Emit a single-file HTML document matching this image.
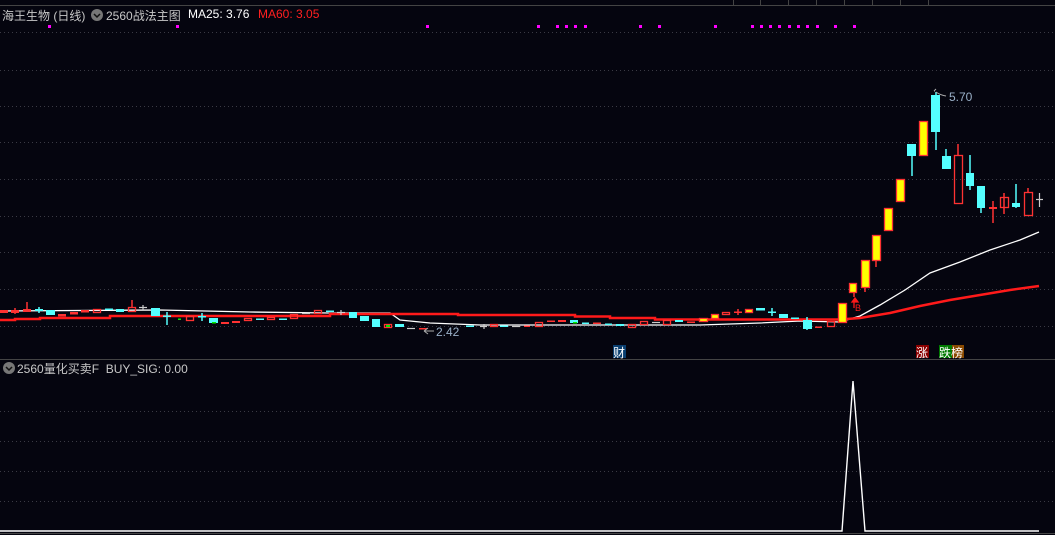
<!DOCTYPE html>
<html><head><meta charset="utf-8"><style>
html,body{margin:0;padding:0;background:#05050f;width:1055px;height:535px;overflow:hidden}
.t{position:absolute;font-family:"Liberation Sans","Noto Sans CJK SC",sans-serif;font-size:12px;white-space:nowrap}
</style></head><body>
<svg width="1055" height="535" style="position:absolute;left:0;top:0" xmlns="http://www.w3.org/2000/svg">
<g stroke="#3a3a44" stroke-width="1" stroke-dasharray="1,3">
<line x1="0" y1="32.5" x2="1055" y2="32.5"/><line x1="0" y1="70.5" x2="1055" y2="70.5"/><line x1="0" y1="106.5" x2="1055" y2="106.5"/><line x1="0" y1="142.5" x2="1055" y2="142.5"/><line x1="0" y1="179.5" x2="1055" y2="179.5"/><line x1="0" y1="216.5" x2="1055" y2="216.5"/><line x1="0" y1="252.5" x2="1055" y2="252.5"/><line x1="0" y1="289.5" x2="1055" y2="289.5"/><line x1="0" y1="326.5" x2="1055" y2="326.5"/>
<line x1="0" y1="411.5" x2="1055" y2="411.5"/><line x1="0" y1="441.5" x2="1055" y2="441.5"/><line x1="0" y1="471.5" x2="1055" y2="471.5"/><line x1="0" y1="501.5" x2="1055" y2="501.5"/>
</g>
<line x1="0" y1="5.5" x2="1055" y2="5.5" stroke="#444"/>
<g stroke="#444"><line x1="733.5" y1="0" x2="733.5" y2="6"/><line x1="760.5" y1="0" x2="760.5" y2="6"/><line x1="788.5" y1="0" x2="788.5" y2="6"/><line x1="816.5" y1="0" x2="816.5" y2="6"/><line x1="844.5" y1="0" x2="844.5" y2="6"/><line x1="872.5" y1="0" x2="872.5" y2="6"/><line x1="900.5" y1="0" x2="900.5" y2="6"/><line x1="928.5" y1="0" x2="928.5" y2="6"/></g>
<line x1="0" y1="359.5" x2="1055" y2="359.5" stroke="#444"/>
<line x1="0" y1="533.5" x2="1055" y2="533.5" stroke="#444"/>
<g fill="#ff00ff">
<rect x="48" y="25" width="3" height="3"/><rect x="176" y="25" width="3" height="3"/><rect x="426" y="25" width="3" height="3"/><rect x="537" y="25" width="3" height="3"/><rect x="556" y="25" width="3" height="3"/><rect x="565" y="25" width="3" height="3"/><rect x="574" y="25" width="3" height="3"/><rect x="584" y="25" width="3" height="3"/><rect x="639" y="25" width="3" height="3"/><rect x="658" y="25" width="3" height="3"/><rect x="714" y="25" width="3" height="3"/><rect x="751" y="25" width="3" height="3"/><rect x="760" y="25" width="3" height="3"/><rect x="769" y="25" width="3" height="3"/><rect x="778" y="25" width="3" height="3"/><rect x="788" y="25" width="3" height="3"/><rect x="797" y="25" width="3" height="3"/><rect x="806" y="25" width="3" height="3"/><rect x="816" y="25" width="3" height="3"/><rect x="834" y="25" width="3" height="3"/><rect x="853" y="25" width="3" height="3"/>
</g>
<!-- MA lines -->
<polyline fill="none" stroke="#ffffff" stroke-width="1.3" points="0,311 160,310 250,312 330,313 390,313 400,320 430,323 480,325 700,325 760,323 800,321 840,322 860,316 880,305 905,290 930,273 960,262 990,250 1020,240 1039,232"/>
<polyline fill="none" stroke="#ff1a1a" stroke-width="2.5" points="0,320 15,320 15,319 40,319 40,318 110,318 110,316 330,316 330,314 458,314 458,315 575,315 575,316.5 610,316.5 610,318 655,318 655,319.5 840,319.5 860,318 890,313 920,306 950,300 980,295 1010,290 1039,286"/>
<!-- candles -->
<g stroke="#ff3232" stroke-width="1.5">
<line x1="27" y1="302" x2="27" y2="311"/><line x1="15" y1="308" x2="15" y2="314"/><line x1="132" y1="300" x2="132" y2="308"/><line x1="854" y1="283" x2="854" y2="297"/><line x1="865" y1="283" x2="865" y2="292"/><line x1="876" y1="258" x2="876" y2="267"/><line x1="958" y1="144" x2="958" y2="156"/><line x1="993" y1="201" x2="993" y2="223"/><line x1="1004" y1="193" x2="1004" y2="214"/><line x1="1028" y1="188" x2="1028" y2="193"/><line x1="738" y1="309" x2="738" y2="315"/>
</g>
<g stroke="#54ffff" stroke-width="1.5">
<line x1="167" y1="312" x2="167" y2="325"/><line x1="202" y1="313" x2="202" y2="321"/><line x1="912" y1="155" x2="912" y2="176"/><line x1="936" y1="92" x2="936" y2="150"/><line x1="946" y1="149" x2="946" y2="157"/><line x1="970" y1="155" x2="970" y2="190"/><line x1="981" y1="206" x2="981" y2="213"/><line x1="1016" y1="184" x2="1016" y2="208"/><line x1="772" y1="308" x2="772" y2="316"/><line x1="807" y1="317" x2="807" y2="330"/><line x1="39" y1="307" x2="39" y2="313"/>
</g>
<g stroke="#cccccc" stroke-width="1.2">
<line x1="1036" y1="199.5" x2="1043" y2="199.5"/><line x1="1039.5" y1="193" x2="1039.5" y2="207"/>
<line x1="139" y1="307.5" x2="147" y2="307.5"/><line x1="143" y1="305" x2="143" y2="310"/>
<line x1="302" y1="313.5" x2="310" y2="313.5"/><line x1="337" y1="312.5" x2="345" y2="312.5"/><line x1="341" y1="310" x2="341" y2="315"/>
<line x1="407" y1="328.5" x2="415" y2="328.5"/><line x1="480" y1="326.5" x2="487" y2="326.5"/><line x1="484" y1="324" x2="484" y2="329"/><line x1="512" y1="326.5" x2="520" y2="326.5"/><line x1="652" y1="322.5" x2="660" y2="322.5"/>
</g>
<g fill="#ff3232">
<rect x="0" y="310" width="8" height="3"/><rect x="11" y="310" width="8" height="3"/><rect x="23" y="309" width="8" height="3"/><rect x="58" y="314" width="8" height="2.5"/><rect x="70" y="312" width="8" height="2.5"/><rect x="81" y="310" width="8" height="2.5"/><rect x="221" y="322" width="8" height="2"/><rect x="232" y="321" width="8" height="2"/><rect x="419" y="328" width="8" height="1.5"/><rect x="524" y="325.5" width="6" height="1.5"/><rect x="547" y="320.5" width="8" height="1.5"/><rect x="558" y="320" width="8" height="2"/><rect x="593" y="322.5" width="8" height="1.5"/><rect x="687" y="321.5" width="8" height="1.5"/><rect x="734" y="311.5" width="8" height="1.5"/><rect x="815" y="326.5" width="7" height="1.5"/><rect x="989" y="207" width="8" height="2"/>
</g>
<g fill="none" stroke="#ff3232" stroke-width="1.3">
<rect x="93.5" y="309.5" width="7" height="3"/><rect x="128.5" y="307.5" width="7" height="4"/><rect x="186.5" y="316.5" width="7" height="4"/><rect x="244.5" y="318.5" width="7" height="2"/><rect x="267.5" y="317.5" width="7" height="2"/><rect x="290.5" y="314.5" width="7" height="4"/><rect x="314.5" y="310.5" width="7" height="3"/><rect x="384.5" y="324.5" width="7" height="3"/><rect x="490.5" y="324.5" width="7" height="2"/><rect x="535.5" y="322.5" width="7" height="4"/><rect x="628.5" y="324.5" width="7" height="3"/><rect x="640.5" y="321.5" width="7" height="3"/><rect x="663.5" y="320.5" width="7" height="4"/><rect x="722.5" y="312.5" width="7" height="2"/><rect x="827.5" y="321.5" width="7" height="5"/><rect x="954.5" y="155.5" width="8" height="48"/><rect x="1000.5" y="197.5" width="8" height="10"/><rect x="1024.5" y="192.5" width="8" height="23"/>
</g>
<g fill="#ffff00" stroke="#ff3232" stroke-width="1.3">
<rect x="699.5" y="318.5" width="8" height="3"/><rect x="711.5" y="314.5" width="7" height="4"/><rect x="745.5" y="309.5" width="7" height="3"/><rect x="838.5" y="303.5" width="8" height="19"/><rect x="849.5" y="283.5" width="7" height="9"/><rect x="861.5" y="260.5" width="8" height="27"/><rect x="872.5" y="235.5" width="8" height="25"/><rect x="884.5" y="208.5" width="8" height="22"/><rect x="896.5" y="179.5" width="8" height="22"/><rect x="919.5" y="121.5" width="8" height="34"/>
</g>
<g fill="#54ffff">
<rect x="35" y="309" width="8" height="2"/><rect x="46" y="310" width="9" height="5"/><rect x="105" y="308.5" width="8" height="1.5"/><rect x="116" y="309" width="8" height="3"/><rect x="151" y="308" width="9" height="8"/><rect x="163" y="315.5" width="8" height="1.5"/><rect x="198" y="316" width="8" height="1.5"/><rect x="209" y="318" width="9" height="5"/><rect x="256" y="318.5" width="8" height="1.5"/><rect x="279" y="318.5" width="8" height="1.5"/><rect x="326" y="310.5" width="8" height="1.5"/><rect x="349" y="312" width="8" height="6"/><rect x="360" y="316" width="9" height="5"/><rect x="372" y="319" width="8" height="8"/><rect x="395" y="324" width="9" height="3"/><rect x="466" y="325.5" width="8" height="1.5"/><rect x="500" y="325.5" width="8" height="1.5"/><rect x="570" y="320" width="8" height="3"/><rect x="582" y="322.5" width="7" height="1.5"/><rect x="605" y="323.5" width="7" height="1.5"/><rect x="616" y="324" width="8" height="2"/><rect x="675" y="320" width="8" height="2"/><rect x="756" y="308" width="9" height="2.5"/><rect x="768" y="311.5" width="8" height="1.5"/><rect x="779" y="314" width="9" height="4"/><rect x="791" y="317.5" width="8" height="1.5"/><rect x="803" y="320" width="9" height="9"/><rect x="907" y="144" width="9" height="12"/><rect x="931" y="95" width="9" height="37"/><rect x="942" y="156" width="9" height="13"/><rect x="966" y="173" width="8" height="13"/><rect x="977" y="186" width="8" height="22"/><rect x="1012" y="203" width="8" height="4"/>
</g>
<g fill="#00ee00"><rect x="178" y="318.5" width="3" height="1.5"/><rect x="212" y="322" width="4" height="1.5"/><rect x="386" y="325" width="4" height="2"/><rect x="573" y="322" width="4" height="1.5"/></g>
<!-- B arrow -->
<path d="M852 302 l3 -4 l3 4 z M854 302 v6" stroke="#ff1a1a" fill="#ff1a1a" stroke-width="1.3"/>
<text x="855" y="311" fill="#ff1a1a" font-family="Liberation Sans" font-size="9">B</text>
<!-- high/low labels -->
<path d="M935 91 l-1 0 m0 0 l2 -2 M936 92 q4 3 10 4" stroke="#aaa" fill="none" stroke-width="1"/>
<text x="949" y="101" fill="#9ab0c8" font-family="Liberation Sans" font-size="12">5.70</text>
<path d="M424 331 l4 -3 m-4 3 l4 3 m-4 -3 h10" stroke="#aaa" fill="none" stroke-width="1"/>
<text x="436" y="336" fill="#9ab0c8" font-family="Liberation Sans" font-size="12">2.42</text>
<!-- lower panel signal -->
<polyline fill="none" stroke="#ffffff" stroke-width="1.4" points="0,531 842,531 853,381 865,531 1039,531"/>
<!-- header icons -->
<circle cx="97" cy="15" r="6" fill="#777"/><path d="M94 14 l3 3 l3 -3" stroke="#111" fill="none" stroke-width="1.5"/>
<circle cx="9" cy="368" r="6" fill="#777"/><path d="M6 367 l3 3 l3 -3" stroke="#111" fill="none" stroke-width="1.5"/>
<!-- badges -->
<rect x="613" y="345" width="13" height="13" fill="#0a3f70"/><rect x="916" y="345" width="13" height="13" fill="#8a0000"/><rect x="939" y="345" width="13" height="13" fill="#007a00"/><rect x="952" y="345" width="12" height="13" fill="#8a4a00"/>
</svg>
<div class="t" style="left:2px;top:7px;color:#c8c8c8">海王生物 (日线)</div>
<div class="t" style="left:106px;top:7px;color:#c8c8c8">2560战法主图</div>
<div class="t" style="left:188px;top:7px;color:#ffffff">MA25: 3.76</div>
<div class="t" style="left:258px;top:7px;color:#ff2020">MA60: 3.05</div>
<div class="t" style="left:17px;top:360px;color:#c8c8c8">2560量化买卖F &nbsp;BUY_SIG: 0.00</div>
<div class="t" style="left:613px;top:344px;color:#fff">财</div>
<div class="t" style="left:916px;top:344px;color:#fff">涨</div>
<div class="t" style="left:939px;top:344px;color:#fff">跌榜</div>
</body></html>
